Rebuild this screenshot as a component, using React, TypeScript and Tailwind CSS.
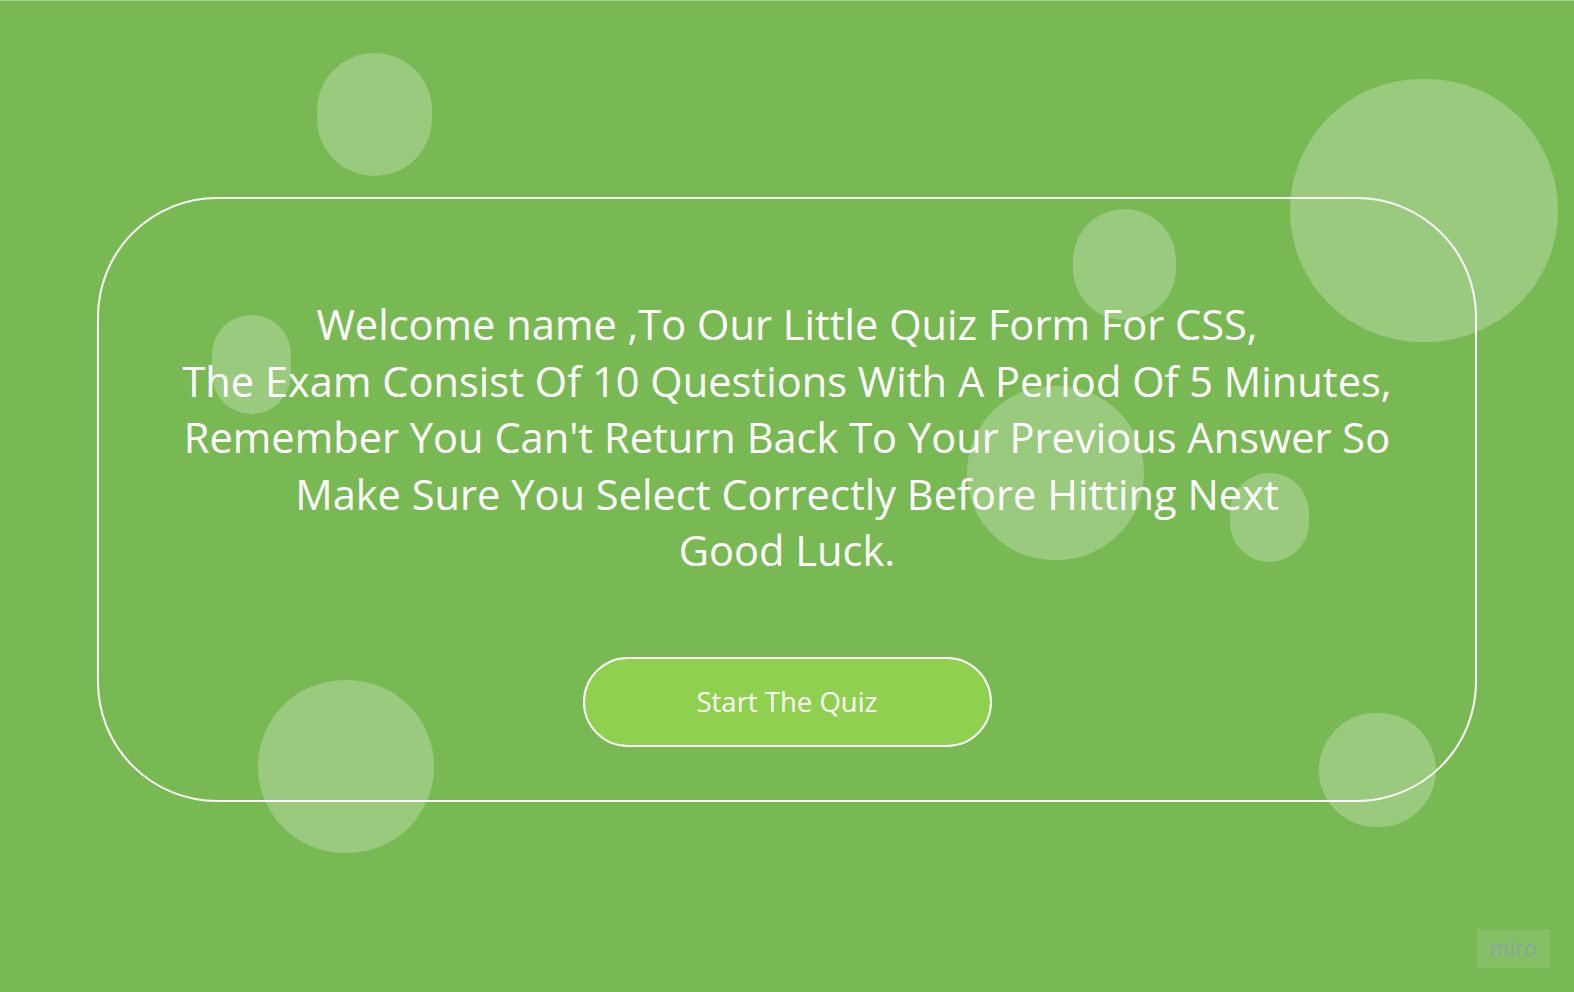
const bubbles = [
  "left-[317px] top-[52px] w-[115px] h-[123px]",
  "left-[1290px] top-[78px] w-[268px] h-[263px]",
  "left-[1073px] top-[208px] w-[103px] h-[111px]",
  "left-[212px] top-[314px] w-[79px] h-[99px]",
  "left-[967px] top-[385px] w-[177px] h-[174px]",
  "left-[1230px] top-[472px] w-[79px] h-[89px]",
  "left-[258px] top-[679px] w-[176px] h-[173px]",
  "left-[1319px] top-[712px] w-[117px] h-[114px]",
];

const App = () => {
  return (
    <div
      className="relative min-h-[992px] overflow-hidden bg-[#79b953] border-t border-[#a9cf92]"
      style={{ fontFamily: '"Open Sans", "Noto Sans", sans-serif' }}
    >
      {/* bubbles */}
      {bubbles.map((b, i) => (
        <div key={i} className={`absolute rounded-full bg-white/25 ${b}`} />
      ))}

      <div className="relative pt-[196px]">
        <div className="mx-auto flex h-[605px] w-[1380px] flex-col items-center rounded-[120px] border-2 border-white pt-[97px]">
          <p className="text-center text-[41.6px] leading-[56.5px] text-white">
            Welcome name ,To Our Little Quiz Form For CSS,
            <br />
            The Exam Consist Of 10 Questions With A Period Of 5 Minutes,
            <br />
            Remember You Can't Return Back To Your Previous Answer So
            <br />
            Make Sure You Select Correctly Before Hitting Next
            <br />
            Good Luck.
          </p>
          <button className="mt-[78px] h-[90px] w-[409px] rounded-full border-2 border-white bg-[#8fd14f] text-[27.5px] text-white">
            Start The Quiz
          </button>
        </div>
      </div>

      {/* watermark */}
      <div className="absolute left-[1477px] top-[928px] flex h-[39px] w-[73px] items-center justify-center bg-[#86c066] text-[21px] leading-none tracking-wide text-[#86a6a0]">
        miro
      </div>
    </div>
  );
};

export default App;
